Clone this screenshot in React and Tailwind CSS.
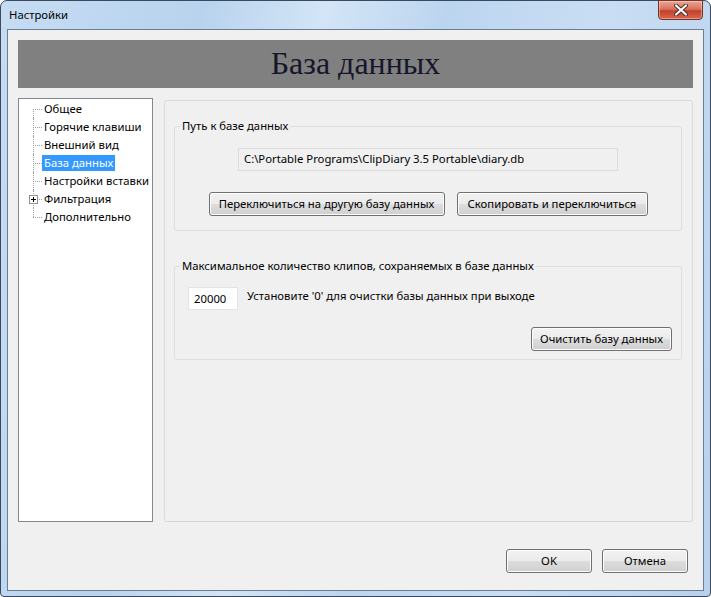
import React from "react";

const treeItems = [
  { label: "Общее" },
  { label: "Горячие клавиши" },
  { label: "Внешний вид" },
  { label: "База данных", selected: true },
  { label: "Настройки вставки" },
  { label: "Фильтрация", expandable: true },
  { label: "Дополнительно" },
];

const winBtn =
  "h-[24px] whitespace-nowrap rounded-[3px] border border-[#707070] bg-[linear-gradient(#f2f2f2_0%,#ebebeb_48%,#dddddd_52%,#cfcfcf_100%)] text-black shadow-[inset_0_0_0_1px_#fcfcfc]";

function TreeRow({ item, first, last }) {
  return (
    <div className="flex h-[18px] items-center whitespace-nowrap">
      <div className="relative h-full w-[23px] shrink-0">
        <div
          className={`absolute left-[14px] border-l border-dotted border-[#a0a0a0] ${
            first ? "top-1/2 bottom-0" : last ? "top-0 bottom-1/2" : "top-0 bottom-0"
          }`}
        />
        <div className="absolute left-[14px] top-1/2 w-[9px] border-t border-dotted border-[#a0a0a0]" />
        {item.expandable && (
          <div className="absolute left-[10px] top-[5px] flex h-[9px] w-[9px] items-center justify-center border border-[#919191] bg-white">
            <svg width="5" height="5" viewBox="0 0 5 5">
              <path d="M0 2.5H5M2.5 0V5" stroke="#000" strokeWidth="1" />
            </svg>
          </div>
        )}
      </div>
      <span
        className={`px-[2px] leading-[16px] ${
          item.selected ? "bg-[#3399ff] text-white" : "text-black"
        }`}
      >
        {item.label}
      </span>
    </div>
  );
}

export default function App() {
  return (
    <div
      className="relative flex h-[597px] w-[711px] flex-col rounded-t-[7px] rounded-b-[4px] border border-[#3a4a5c] bg-[linear-gradient(100deg,#c5dcf3_0%,#b9d3ee_25%,#d3e5f7_40%,#bcd5ef_55%,#c9def4_75%,#b8d1ec_100%)] px-[6px] pb-[5px] pt-[28px] text-[11.3px] text-black"
      style={{ fontFamily: '"Noto Sans", "Open Sans", sans-serif' }}
    >
      {/* title bar */}
      <div className="absolute left-[8px] top-[5px] leading-[18px] text-black">Настройки</div>
      <div className="absolute right-[7px] top-[-1px] flex h-[20px] w-[45px] items-center justify-center rounded-b-[4px] border border-[#7a2f25] bg-[linear-gradient(#e9a696_0%,#d8735f_45%,#c4402a_55%,#d56850_100%)] shadow-[inset_0_0_0_1px_rgba(255,255,255,0.35)]">
        <svg width="14" height="12" viewBox="0 0 14 12">
          <path d="M2 1.5L12 10.5M12 1.5L2 10.5" stroke="#4a2a26" strokeWidth="4" strokeLinecap="round" />
          <path d="M2 1.5L12 10.5M12 1.5L2 10.5" stroke="#ffffff" strokeWidth="2.2" strokeLinecap="round" />
        </svg>
      </div>

      {/* client area */}
      <div className="flex flex-1 flex-col border border-[#6b7d93] bg-[#f0f0f0] p-[10px]">
        <div className="flex h-[48px] items-center justify-center bg-[#808080]">
          <span
            className="-mt-[3px] text-[32px] leading-none text-[#16162a]"
            style={{ fontFamily: '"Liberation Serif", serif' }}
          >
            База данных
          </span>
        </div>

        <div className="mt-[10px] flex">
          {/* tree */}
          <div className="h-[424px] w-[135px] shrink-0 border border-[#828790] bg-white pt-[1px]">
            {treeItems.map((item, i) => (
              <TreeRow key={item.label} item={item} first={i === 0} last={i === treeItems.length - 1} />
            ))}
          </div>

          {/* page */}
          <div className="ml-[11px] mt-[2px] h-[422px] flex-1 rounded-[3px] border border-[#d9d9d9] pl-[9px] pr-[10px] pt-[17px]">
            <fieldset className="rounded-[3px] border border-[#d5dfe5] pb-[14px]">
              <legend className="ml-[5px] px-[2px] leading-[16px]">Путь к базе данных</legend>
              <div className="flex flex-col items-center">
                <div className="mt-[14px] flex h-[23px] w-[380px] items-center border border-[#dcdcdc] bg-[#f0f0f0] px-[5px]">
                  C:\Portable Programs\ClipDiary 3.5 Portable\diary.db
                </div>
                <div className="mt-[21px] flex gap-[12px]">
                  <button className={`${winBtn} w-[236px]`}>Переключиться на другую базу данных</button>
                  <button className={`${winBtn} w-[191px]`}>Скопировать и переключиться</button>
                </div>
              </div>
            </fieldset>

            <fieldset className="mt-[27px] rounded-[3px] border border-[#d5dfe5] pb-[8px]">
              <legend className="ml-[5px] px-[2px] leading-[16px]">
                Максимальное количество клипов, сохраняемых в базе данных
              </legend>
              <div className="mt-[13px] flex items-center pl-[13px]">
                <div className="flex h-[23px] w-[50px] items-center border border-[#e3e3e3] bg-white px-[5px] pt-[2px]">
                  20000
                </div>
                <span className="-mt-[4px] ml-[9px]">Установите '0' для очистки базы данных при выходе</span>
              </div>
              <div className="mt-[17px] flex justify-end pr-[9px]">
                <button className={`${winBtn} h-[23px] w-[141px]`}>Очистить базу данных</button>
              </div>
            </fieldset>
          </div>
        </div>

        <div className="mt-[27px] flex justify-end gap-[10px] pr-[5px]">
          <button className={`${winBtn} w-[86px]`}>OK</button>
          <button className={`${winBtn} w-[86px]`}>Отмена</button>
        </div>
      </div>
    </div>
  );
}
